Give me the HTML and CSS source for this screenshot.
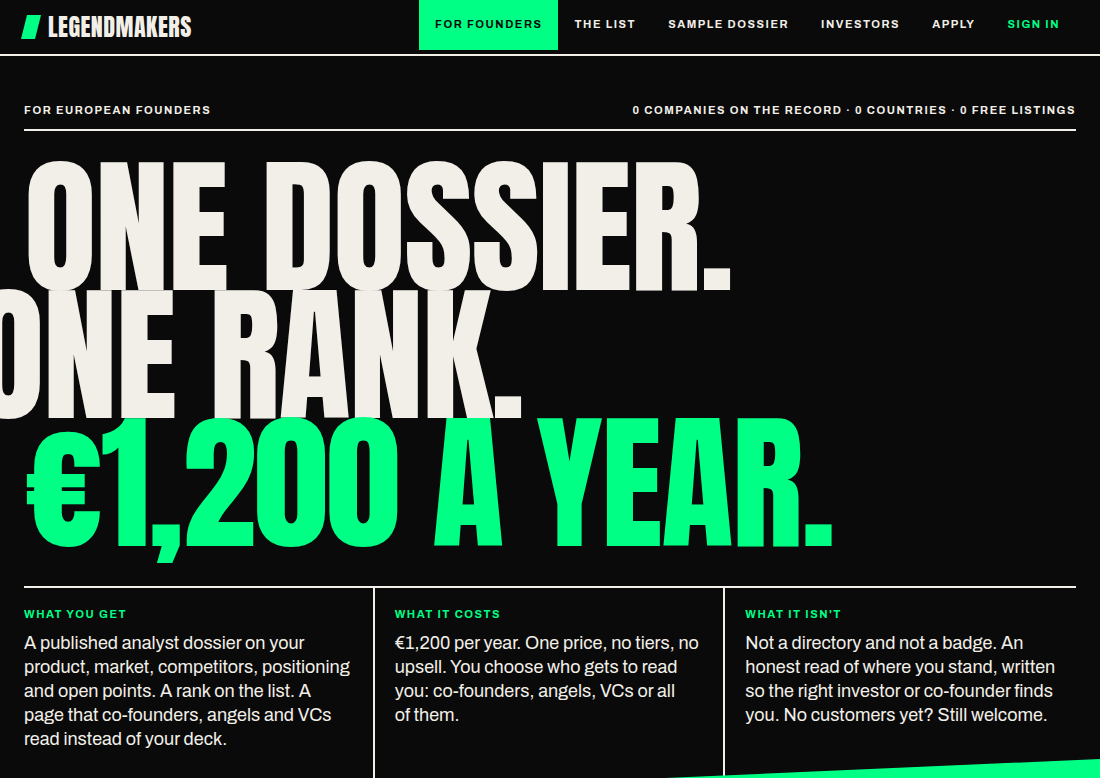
FILE: index.html
```
<!DOCTYPE html>
<html lang="en">
<head>
  <meta charset="UTF-8" />
  <meta name="viewport" content="width=device-width, initial-scale=1.0" />
  <title>Legendmakers – For Founders</title>
  <link rel="stylesheet" href="styles.css">
</head>
<body>
  <header class="navbar">
    <a class="logo" href="#"><span class="logo-mark"></span>LEGENDMAKERS</a>
    <nav class="nav-links">
      <a class="active" href="#founders">For Founders</a>
      <a href="#list">The List</a>
      <a href="#sample">Sample Dossier</a>
      <a href="#investors">Investors</a>
      <a href="#apply">Apply</a>
      <a class="sign-in" href="#signin">Sign In</a>
    </nav>
  </header>

  <main class="hero">
    <div class="hero-meta">
      <span>For European Founders</span>
      <span>0 Companies on the record · 0 Countries · 0 Free listings</span>
    </div>

    <h1 class="headline">
      <span class="line">One dossier.</span>
      <span class="line line-out">One rank.</span>
      <span class="line line-green">€1,200 a year.</span>
    </h1>

    <section class="facts">
      <div class="fact">
        <h2>What you get</h2>
        <p>A published analyst dossier on your product, market, competitors, positioning and open points. A rank on the list. A page that co-founders, angels and VCs read instead of your deck.</p>
      </div>
      <div class="fact">
        <h2>What it costs</h2>
        <p>€1,200 per year. One price, no tiers, no upsell. You choose who gets to read you: co-founders, angels, VCs or all of them.</p>
      </div>
      <div class="fact">
        <h2>What it isn't</h2>
        <p>Not a directory and not a badge. An honest read of where you stand, written so the right investor or co-founder finds you. No customers yet? Still welcome.</p>
      </div>
    </section>
  </main>

  <div class="slash"></div>
</body>
</html>
```
FILE: styles.css
```
*,*::before,*::after{box-sizing:border-box;margin:0;padding:0;}
:root{--ink:#0a0a0a;--paper:#f2efe8;--green:#00ff85;}
body{background:var(--ink);color:var(--paper);font-family:Archivo,"Liberation Sans",Arial,sans-serif;overflow-x:hidden;}
a{text-decoration:none;color:inherit;}

.navbar{display:flex;align-items:flex-start;justify-content:space-between;height:56px;padding:0 24px;border-bottom:2px solid var(--paper);}
.logo{display:flex;align-items:center;gap:10px;height:54px;font-family:Anton,"Liberation Sans Narrow",sans-serif;font-size:24px;letter-spacing:.02em;}
.logo-mark{width:14px;height:24px;background:var(--green);transform:skewX(-14deg);}
.nav-links{display:flex;}
.nav-links a{padding:15px 16px 17px;font-size:11px;line-height:18px;font-weight:700;letter-spacing:.14em;text-transform:uppercase;white-space:nowrap;}
.nav-links .active{background:var(--green);color:var(--ink);}
.nav-links .sign-in{color:var(--green);}

.hero{padding:46px 24px 0;}
.hero-meta{display:flex;justify-content:space-between;gap:24px;padding-bottom:11px;border-bottom:2px solid var(--paper);font-size:11px;line-height:16px;font-weight:700;letter-spacing:.14em;text-transform:uppercase;}

.headline{padding:32px 0 39px;font-family:Anton,"Liberation Sans Narrow",sans-serif;font-size:149px;line-height:128px;font-weight:400;letter-spacing:-.01em;text-transform:uppercase;white-space:nowrap;}
.line{display:block;}
.line-out{margin-left:-52px;}
.line-green{color:var(--green);}

.facts{display:grid;grid-template-columns:repeat(3,1fr);border-top:2px solid var(--paper);}
.fact{padding:18px 20px 52px;border-right:2px solid var(--paper);}
.fact:first-child{padding-left:0;}
.fact:last-child{padding-right:0;border-right:none;}
.fact h2{margin-bottom:9px;font-size:11px;line-height:16px;font-weight:700;letter-spacing:.14em;text-transform:uppercase;color:var(--green);}
.fact p{font-size:18px;line-height:24px;text-wrap:pretty;}

.slash{height:120px;margin-top:-44px;background:var(--green);clip-path:polygon(0 40%,100% 0,100% 100%,0 100%);}

@media (max-width: 800px) {
  .facts { grid-template-columns: 1fr; }
  .fact { padding: 18px 0; border-right: none; }
  .navbar { height: auto; flex-wrap: wrap; }
  .nav-links { flex-wrap: wrap; }
  .headline { font-size: 64px; line-height: 64px; }
}
```
